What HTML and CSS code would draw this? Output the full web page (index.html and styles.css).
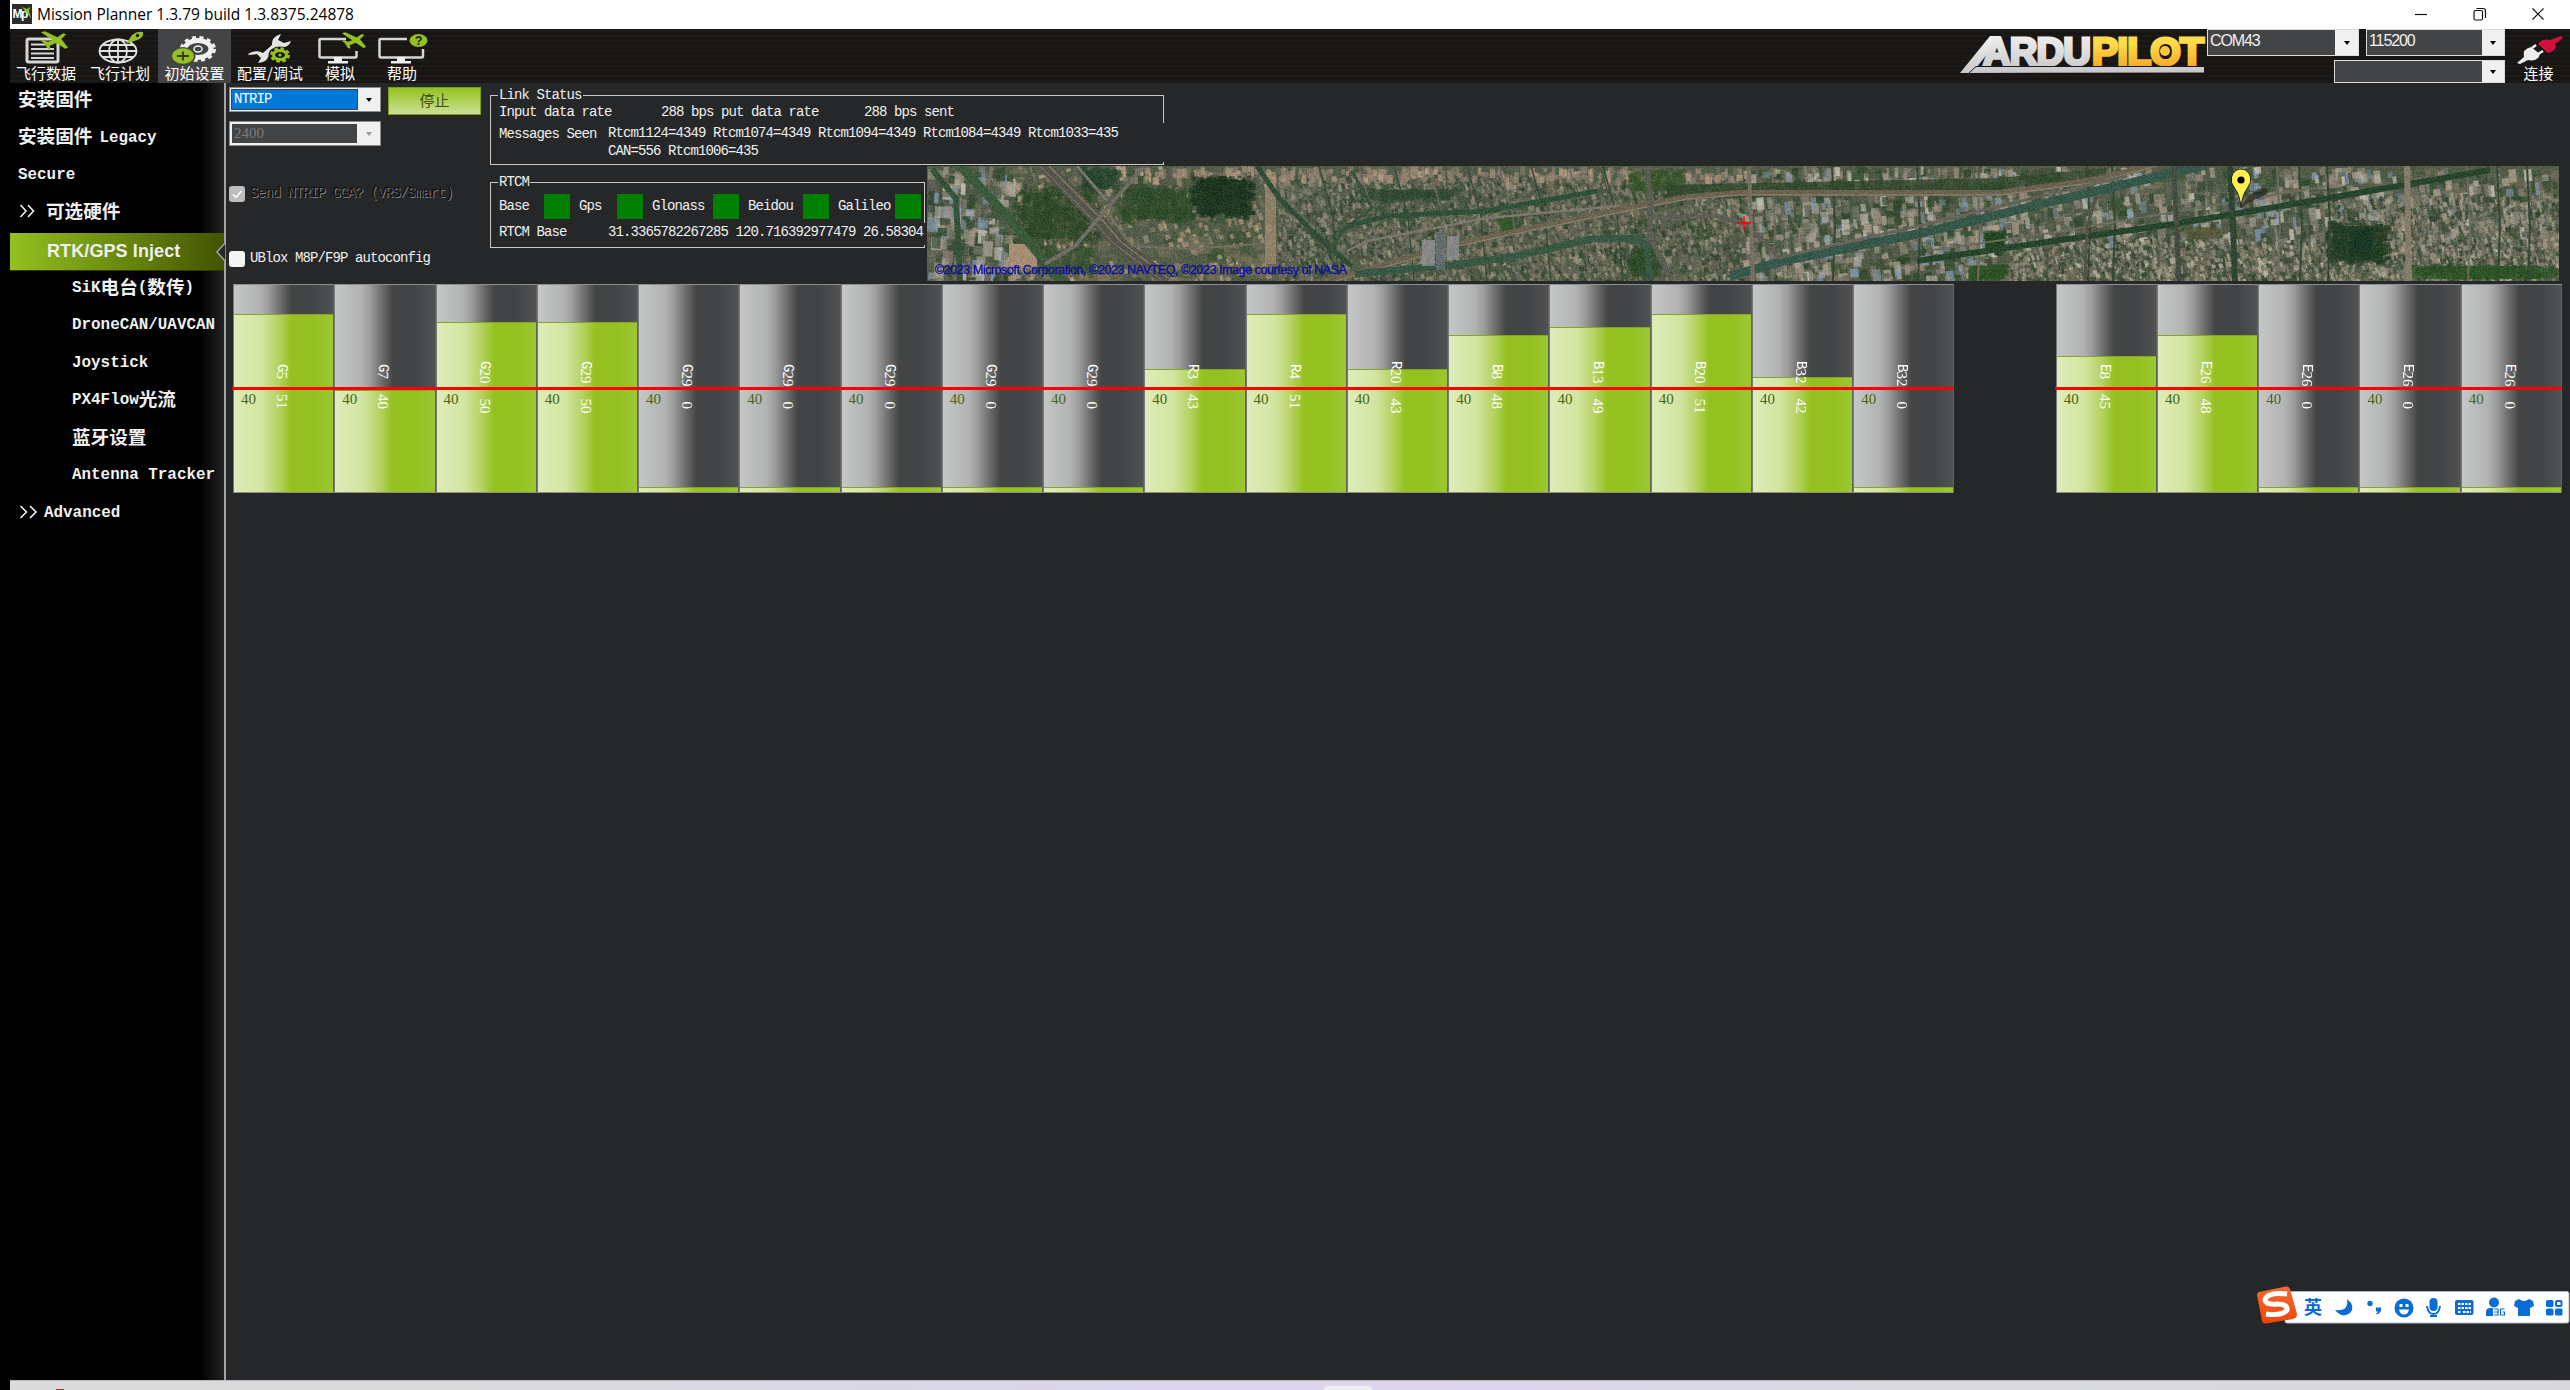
FILE: index.html
```html
<!DOCTYPE html>
<html lang="zh-CN">
<head>
<meta charset="utf-8">
<title>Mission Planner</title>
<link rel="stylesheet" href="styles.css">
</head>
<body>
<svg class="defs" width="0" height="0" aria-hidden="true">
  <defs>
    <linearGradient id="silver" x1="0" y1="0" x2="0" y2="1"><stop offset="0" stop-color="#f4f4f4"/><stop offset="1" stop-color="#c6c6c8"/></linearGradient>
    <linearGradient id="gold" x1="0" y1="0" x2="0" y2="1"><stop offset="0.3" stop-color="#fddb4a"/><stop offset="1" stop-color="#f59a20"/></linearGradient>
    <symbol id="plane" viewBox="0 0 30 20"><path d="M1 1 L5 0 L18 6 L24 2 L27 3 L22 8 L29 17 L26 18 L17 12 L10 15 L11 19 L8 18 L4 12 L1 10 L4 9 L8 11 L13 9 Z" fill="#94c11f"/></symbol>
  </defs>
</svg>
<div class="app">
  <header class="titlebar">
    <svg class="app-icon" viewBox="0 0 20 20"><rect width="20" height="20" fill="#2b2c2e"/><text x="0.5" y="14" textLength="15" class="mp">Mp</text><path d="M10 3l5 2 3-2-1 4 2 7-5-6z" fill="#94c11f"/></svg>
    <span class="title">Mission Planner 1.3.79 build 1.3.8375.24878</span>
    <div class="window-buttons">
      <svg viewBox="0 0 14 14"><path d="M1 7.5h12"/></svg>
      <svg viewBox="0 0 14 14"><rect x="1" y="3.5" width="8.5" height="9.5" rx="1.5"/><path d="M3.5 1.5h6.5q2.5 0 2.5 2.5v7"/></svg>
      <svg viewBox="0 0 14 14"><path d="M1.5 1.5l11 11M12.5 1.5l-11 11"/></svg>
    </div>
  </header>

  <nav class="toolbar">
    <button class="tool t1">
      <svg viewBox="10 29 72 36"><rect x="27" y="39" width="31" height="23" rx="1.5" fill="none" stroke="#d6d6d6" stroke-width="3"/><path d="M31 44.500h14M31 49h23M31 53.500h23M31 58h23" stroke="#d6d6d6" stroke-width="2"/><use href="#plane" x="40" y="31" width="29" height="20"/></svg>
      <span>飞行数据</span>
    </button>
    <button class="tool t2">
      <svg viewBox="82 29 76 36"><g fill="none" stroke="#e0e0e0" stroke-width="1.800"><ellipse cx="118" cy="51" rx="18.500" ry="11.500"/><ellipse cx="118" cy="51" rx="9" ry="11.500"/><path d="M118 39v24M100 51h37M102 45h32M102 57h32"/></g><path d="M126 44 L132 35 Q137 31 143 32 Q144 38 137 40 Z" fill="#94c11f"/><circle cx="137.500" cy="35.500" r="1.700" fill="#1a1816"/></svg>
      <span>飞行计划</span>
    </button>
    <button class="tool t3 active">
      <svg viewBox="158 29 73 36"><ellipse cx="198" cy="49" rx="13" ry="8.500" fill="none" stroke="#f0f0f0" stroke-width="5"/><ellipse cx="198" cy="49" rx="16.500" ry="11.500" fill="none" stroke="#f0f0f0" stroke-width="3" stroke-dasharray="4 3.500"/><ellipse cx="198" cy="49" rx="4" ry="3" fill="none" stroke="#f0f0f0" stroke-width="1.500"/><ellipse cx="183" cy="56" rx="12.500" ry="9" fill="#434445"/><ellipse cx="183" cy="56" rx="11" ry="7.700" fill="#94c11f"/><path d="M177 56h12M183 51.500v9" stroke="#333c10" stroke-width="2"/></svg>
      <span>初始设置</span>
    </button>
    <button class="tool t4">
      <svg viewBox="231 29 78 36"><path d="M248 54 Q257 49 263 53 L272 45 Q271 37 281 34 L278 40 L284 43 L291 41 Q289 48 279 48 L268 57 Q267 62 258 63 L261 58 L257 54 L249 55 Z" fill="#e4e4e4"/><ellipse cx="280" cy="55" rx="11.500" ry="8.500" fill="#1a1816"/><ellipse cx="280" cy="55" rx="6.500" ry="4.500" fill="none" stroke="#94c11f" stroke-width="3"/><ellipse cx="280" cy="55" rx="8.800" ry="6.400" fill="none" stroke="#94c11f" stroke-width="2.500" stroke-dasharray="3.500 2.500"/><circle cx="280" cy="55" r="1.600" fill="#94c11f"/></svg>
      <span>配置/调试</span>
    </button>
    <button class="tool t5">
      <svg viewBox="309 29 62 36"><path d="M346 39H321Q319.500 39 319.500 40V56Q319.500 57.500 321 57.500H355Q356.500 57.500 356.500 56V51" fill="none" stroke="#d6d6d6" stroke-width="2.500"/><path d="M334 57h8v4h6v2.500h-20V61h6z" fill="#eee"/><use href="#plane" x="341" y="31" width="26" height="20"/></svg>
      <span>模拟</span>
    </button>
    <button class="tool t6">
      <svg viewBox="371 29 62 36"><path d="M407 39H381Q379.500 39 379.500 40V56Q379.500 57.500 381 57.500H421Q423 57.500 423 56V49" fill="none" stroke="#d6d6d6" stroke-width="2.500"/><path d="M397 57h8v4h6v2.500h-20V61h6z" fill="#eee"/><ellipse cx="418.500" cy="40.500" rx="9" ry="6.500" fill="#94c11f"/><text x="415" y="45" class="question">?</text></svg>
      <span>帮助</span>
    </button>
    <svg class="logo" viewBox="1959 29 248 54">
      <path d="M1961 73 L1991 36 H2002 L1978 67 H2205 V72.500 Z" fill="url(#silver)"/>
      <text x="1984" y="65" textLength="107" lengthAdjust="spacingAndGlyphs" class="brand" fill="url(#silver)" stroke="url(#silver)">ARDU</text>
      <text x="2093" y="65" textLength="111" lengthAdjust="spacingAndGlyphs" class="brand" fill="url(#gold)" stroke="url(#gold)">PILOT</text>
      <circle cx="2166" cy="51" r="5" fill="#fccb3c"/>
      <path d="M1970 73 L1977 66.500 H2204" stroke="#1a1816" stroke-width="1" fill="none"/>
    </svg>
    <div class="ports">
      <div class="select port"><span class="value">COM43</span><i></i></div>
      <div class="select baud"><span class="value">115200</span><i></i></div>
      <div class="select sysid"><span class="value"></span><i></i></div>
    </div>
    <button class="tool connect">
      <svg viewBox="2507 29 63 36"><path d="M2517 63 L2524 57 Q2522 49 2531 47 L2540 54 Q2538 62 2528 60 L2520 64 Z" fill="#eee"/><path d="M2532 48l4-3M2538 54l5-3" stroke="#eee" stroke-width="2.500"/><path d="M2538 44 Q2542 38 2550 40 L2561 36 L2563 38 L2555 44 Q2558 50 2548 53 Z" fill="#d5103c"/></svg>
      <span>连接</span>
    </button>
  </nav>

  <main class="body">
    <aside class="sidebar">
      <a><b>安装固件</b></a>
      <a><b>安装固件</b><span class="legacy">Legacy</span></a>
      <a><span>Secure</span></a>
      <a><svg class="chev" viewBox="0 0 17 14"><path d="M1.500 1l5.500 6-5.500 6M9 1l5.500 6-5.500 6"/></svg><b class="after">可选硬件</b></a>
      <a class="selected">RTK/GPS Inject<svg viewBox="0 0 10 20"><path d="M10 0L1 10l9 10z"/></svg></a>
      <a class="sub"><span>SiK</span><b>电台</b><span>(</span><b>数传</b><span>)</span></a>
      <a class="sub"><span>DroneCAN/UAVCAN</span></a>
      <a class="sub"><span>Joystick</span></a>
      <a class="sub"><span>PX4Flow</span><b>光流</b></a>
      <a class="sub"><b>蓝牙设置</b></a>
      <a class="sub"><span>Antenna Tracker</span></a>
      <a><svg class="chev wide" viewBox="0 0 19 14"><path d="M1.500 1l6 6-6 6M11 1l6 6-6 6"/></svg><span class="adv">Advanced</span></a>
    </aside>

    <section class="content">
      <div class="top">
        <div class="controls">
          <div class="line">
            <div class="select source"><span class="value">NTRIP</span><i></i></div>
            <button class="stop">停止</button>
          </div>
          <div class="select rate disabled"><span class="value num">2400</span><i></i></div>
          <label class="check disabled"><svg viewBox="0 0 16 16"><path d="M4 8.500l3 3 5.500-6.500"/></svg>Send NTRIP GGA? (VRS/Smart)</label>
          <label class="check ublox"><svg viewBox="0 0 16 16"></svg>UBlox M8P/F9P autoconfig</label>
        </div>
        <div class="status">
          <fieldset class="group link">
            <legend>Link Status</legend>
            <div class="rates"><span class="r1">Input data rate</span><span class="r2">288 bps</span><span class="r3">put data rate</span><span>288 bps sent</span></div>
            <div class="seen"><span class="seen-label">Messages Seen</span><span>Rtcm1124=4349 Rtcm1074=4349 Rtcm1094=4349 Rtcm1084=4349 Rtcm1033=435<br>CAN=556 Rtcm1006=435</span></div>
          </fieldset>
          <div class="lower">
            <fieldset class="group rtcm">
              <legend>RTCM</legend>
              <div class="leds"><span class="l1">Base</span><i></i><span class="l2">Gps</span><i></i><span class="l3">Glonass</span><i></i><span class="l4">Beidou</span><i></i><span class="l5">Galileo</span><i></i></div>
              <div class="base"><span>RTCM Base</span><span>31.3365782267285 120.716392977479 26.58304</span></div>
            </fieldset>
            <div class="map">
              <canvas id="map" width="1632" height="115"></canvas>
              <svg class="pin" viewBox="0 0 44 42"><path d="M11 39 Q22 19 36 20 Q42 24 31 29 Q20 33 12 40z" fill="#1a1a14" opacity="0.550"/><path d="M11 40 Q10 27 4.500 20 Q0 14 1.500 9 Q4 1 11 1 Q18 1 20.500 9 Q22 14 17.500 20 Q12 27 11 40z" fill="#fcf151" stroke="#222" stroke-width="1"/><circle cx="11" cy="12" r="3.600" fill="#000"/></svg>
              <svg class="cross" viewBox="0 0 14 14"><path d="M7 0v14M0 7h14" stroke="#f00" stroke-width="1.300"/></svg>
              <svg class="copyright" viewBox="0 0 414 18"><text x="1" y="13" textLength="412">©2023 Microsoft Corporation, ©2023 NAVTEQ, ©2023 Image courtesy of NASA</text></svg>
            </div>
          </div>
        </div>
      </div>
      <div class="bars" id="bars"></div>
    </section>
  </main>
  <footer class="taskbar"><i class="red"></i><i class="tile"></i></footer>
</div>

<div class="ime">
  <svg viewBox="2256 1284 314 42">
    <defs><linearGradient id="org" x1="0" y1="0" x2="0" y2="1"><stop offset="0" stop-color="#f46a32"/><stop offset="1" stop-color="#f0450c"/></linearGradient></defs>
    <rect x="2285" y="1291.500" width="284" height="31.500" rx="2" fill="#fff" stroke="#a9b8cc"/>
    <path d="M2259 1292 L2286 1286.500 Q2289 1286 2290 1289 L2297 1314 Q2297 1318 2293 1319 L2266 1323.500 Q2263 1324 2262 1321 L2257 1295 Q2257 1292.500 2259 1292z" fill="url(#org)"/>
    <path d="M2287 1294 Q2267 1292 2265 1300 Q2266 1305 2277 1304 Q2288 1304 2287 1310 Q2283 1316 2266 1314" fill="none" stroke="#fff" stroke-width="5"/>
    <text x="2304" y="1314" class="ime-text">英</text>
    <g fill="#0a6cd6">
      <path d="M2347 1299 Q2356 1306 2350 1313 Q2342 1319 2335 1310 Q2349 1312 2347 1299z"/>
      <circle cx="2370" cy="1303.500" r="2.700"/><path d="M2376 1307.500h5q1 5-4 7l-1-1q2-1 2-2h-2z"/>
      <circle cx="2404" cy="1308" r="9.500"/>
      <rect x="2429.500" y="1298" width="8" height="13" rx="4"/><path d="M2427 1306q1 8 6.500 8t6.500-8" fill="none" stroke="#0a6cd6" stroke-width="2"/><path d="M2430 1315h7v2h-7z"/>
      <rect x="2455" y="1300" width="18.500" height="15" rx="2"/>
      <circle cx="2494" cy="1302.500" r="5"/><path d="M2486 1316v-4q0-4 4-4h7v8z"/>
      <path d="M2519 1299l-4 2-1 5 4 2v8h12v-8l4-2-1-5-4-2q-5 4-10 0z"/>
      <rect x="2546" y="1300" width="7.500" height="7" rx="1.500"/><rect x="2546" y="1308.500" width="7.500" height="7" rx="1.500"/><rect x="2555" y="1308.500" width="7.500" height="7" rx="1.500"/>
      <rect x="2556" y="1301" width="5.500" height="5" rx="1" fill="none" stroke="#0a6cd6" stroke-width="2"/>
    </g>
    <g fill="#fff"><rect x="2399.500" y="1304" width="3" height="3"/><rect x="2405.500" y="1304" width="3" height="3"/><path d="M2399 1309.500h10q-1 5-5 5t-5-5z"/><path d="M2493 1308h13v8h-13z"/></g>
    <path d="M2458 1304h13M2458 1308h13M2458 1312h3M2463 1312h8" stroke="#fff" stroke-width="2" stroke-dasharray="2.500 1"/>
    <path d="M2494 1309h4v6h-4M2494 1312h4M2504.500 1309h-4v6h4v-3h-2" fill="none" stroke="#0a6cd6" stroke-width="1.200"/>
  </svg>
</div>
<script src="app.js"></script>
</body>
</html>
```
FILE: styles.css
```css
* { box-sizing: border-box; }
body { margin: 0; background: #000; overflow: hidden; }
.defs { display: block; position: absolute; }
button { border: 0; padding: 0; background: none; font: inherit; color: inherit; }
.app {
  width: 2570px; height: 1390px; padding-left: 10px;
  display: flex; flex-direction: column;
  font: 14px/17.5px "Liberation Mono", "Noto Sans CJK SC", monospace;
  letter-spacing: -0.9px; color: #f0f0f0;
}
.num { font-family: "Liberation Serif", serif; font-size: 15px; letter-spacing: 0; }

/* title bar */
.titlebar { height: 29px; flex: none; background: #fff; display: flex; align-items: center; padding: 0 25px 2px 2px; }
.app-icon { width: 20px; height: 20px; }
.mp { font: bold 12px "Liberation Sans", sans-serif; fill: #fff; }
.title { margin-left: 5px; flex: 1; color: #000; font: 15.5px/26px "Open Sans", "Noto Sans", sans-serif; letter-spacing: 0; }
.window-buttons { display: flex; gap: 44.500px; }
.window-buttons svg { width: 14px; height: 14px; fill: none; stroke: #111; stroke-width: 1.2; }

/* toolbar */
.toolbar {
  height: 54px; flex: none; display: flex;
  background: repeating-linear-gradient(0deg, #1a1816 0 2px, #1e1b18 2px 3px, #171513 3px 5px);
}
.tool { display: flex; flex-direction: column; align-items: center; font: 15px/15px "Noto Sans CJK SC", sans-serif; letter-spacing: 0; color: #fff; }
.tool svg { height: 36px; width: 100%; display: block; }
.t1 { width: 72px; } .t2 { width: 76px; } .t3 { width: 73px; } .t4 { width: 78px; } .t5 { width: 62px; } .t6 { width: 62px; }
.tool.active { background: #434445; }
.connect { width: 63px; margin-left: 2px; }
.question { font: bold 12px "Liberation Sans", sans-serif; fill: #1a1816; }
.logo { width: 248px; height: 54px; margin-left: auto; }
.brand { font: bold 38px "Liberation Sans", sans-serif; stroke-width: 3; }
.ports { width: 298px; margin-left: 1px; display: grid; grid-template-columns: 152px 1fr; column-gap: 7px; row-gap: 4px; grid-template-rows: 27px 23px; }
.ports .select { font: 16px/22px "Liberation Sans", sans-serif; letter-spacing: -1.1px; color: #f0f0f0; }
.port, .baud { height: 27px; }
.sysid { grid-column: 1 / 3; margin-left: 127px; height: 23px; }
.select { display: flex; border: 1.500px solid #dcdcdc; background: #f0f0f0; }
.select .value { flex: 1; background: #434445; padding-left: 2px; white-space: pre; }
.select i { width: 23px; display: flex; align-items: center; justify-content: center; }
.select i::after { content: ""; border: 3.500px solid transparent; border-top: 4px solid #000; border-bottom: 0; }
.ports .baud i, .ports .sysid i { width: 22px; }

/* navigation */
.body { flex: 1; display: flex; min-height: 0; }
.sidebar { width: 216px; flex: none; border-right: 2px solid #a4a4a4; background: linear-gradient(90deg, #000 190px, #222 214px); font-size: 15.900px; font-weight: bold; letter-spacing: 0; }
.sidebar a { height: 37.550px; display: flex; align-items: center; padding-left: 8px; white-space: pre; position: relative; top: -3px; }
.sidebar span { padding-top: 4px; }
.sidebar b { font: bold 18.600px/20px "Noto Sans CJK SC", sans-serif; margin-top: -2px; }
.sidebar .sub { padding-left: 62px; }
.legacy { margin-left: 7px; }
.chev { width: 17px; height: 14px; fill: none; stroke: #f0f0f0; stroke-width: 1.6; margin-left: 1px; }
.chev.wide { width: 19px; }
.after { margin-left: 10px; }
.adv { margin-left: 6px; }
.sidebar .selected { padding-left: 37px; top: 0; background: linear-gradient(90deg, #94c11f, #425400); font: bold 18px "Liberation Sans", sans-serif; letter-spacing: 0.1px; border-bottom: 1px solid #2d3a00; }
.selected svg { position: absolute; right: -2px; top: 9px; width: 10px; height: 20px; fill: #262729; stroke: #a4a4a4; stroke-width: 1.5; }

/* content */
.content { flex: 1; background: #262729; padding: 4px 0 0 3px; min-width: 0; }
.top { display: flex; height: 197px; }
.controls { width: 252px; flex: none; display: flex; flex-direction: column; }
.line { display: flex; justify-content: space-between; height: 28px; align-items: flex-start; }
.controls .select { width: 152px; height: 25px; border: 1px solid #8b8b8b; padding: 2px 0 2px 2px; line-height: 19px; }
.controls .select i { margin: -2px 0; }
.source .value { background: #0078d7; outline: 1px solid #434445; color: #fff; }
.controls .rate { margin-top: 6px; }
.rate .value { color: #7b7c7d; }
.rate i::after { border-top-color: #9a9a9a; }
.stop { width: 93px; height: 28px; background: linear-gradient(#94c11f, #cde296); border: 1px solid #799e1a; color: #404f0a; font: 15px/21px "Noto Sans CJK SC", sans-serif; letter-spacing: 0; padding-bottom: 4px; }
.check { display: flex; align-items: center; gap: 5px; height: 18px; margin-top: 39px; }
.check svg { width: 16px; height: 16px; border-radius: 3px; background: #f4f4f4; fill: none; stroke: #fff; stroke-width: 1.5; }
.check.disabled { color: #0c0d0e; text-shadow: 1px 1px 0 #808182; }
.check.disabled svg { background: #bdbdbd; }
.check.ublox { margin-top: 47px; }
.status { margin-left: 9px; flex: 1; }
.group { margin: 0; padding: 0; border: 1px solid #c8c8c8; min-width: 0; position: relative; }
.group legend { margin-left: 7px; padding: 0 1px; line-height: 16px; height: 16px; }
.link { width: 674px; height: 78px; }
.link::after { content: ""; position: absolute; right: -1px; top: 20px; width: 1px; height: 39px; background: #262729; }
.rates { display: flex; padding-left: 8px; line-height: 18px; }
.r1 { width: 162px; } .r2 { width: 60px; } .r3 { width: 143px; }
.seen { display: flex; padding: 4px 0 0 8px; white-space: pre; }
.seen-label { width: 109px; padding-top: 1px; }
.lower { display: flex; height: 117px; padding-top: 1px; }
.rtcm { width: 435px; height: 74px; margin-top: 8px; }
.rtcm::after { content: ""; position: absolute; right: -1px; top: 33px; width: 1px; height: 22px; background: #262729; }
.leds { display: flex; align-items: center; padding-left: 8px; height: 27px; margin-top: 3px; }
.leds i { width: 25.500px; height: 25px; background: #008000; }
.leds i + span { margin-left: 9.500px; }
.l1 { width: 45px; } .l2 { width: 38px; } .l3 { width: 61px; } .l4 { width: 55px; } .l5 { width: 57px; }
.leds span { padding-top: 1px; }
.base { display: flex; padding-left: 8px; white-space: pre; line-height: 25px; }
.base span:first-child { width: 109px; flex: none; }
.map { width: 1632px; height: 115px; margin-left: 2px; position: relative; overflow: hidden; flex: none; }
.map canvas { display: block; }
.pin { position: absolute; left: 1303px; top: 2px; width: 44px; height: 42px; }
.cross { position: absolute; left: 810px; top: 50px; width: 14px; height: 14px; }
.copyright { position: absolute; left: 7px; top: 95px; width: 414px; height: 18px; }
.copyright text { font: 12.500px "Liberation Sans", sans-serif; letter-spacing: 0; fill: #10109c; stroke: #10109c; stroke-width: 0.4; }

/* signal bars */
.bars { width: 2329px; height: 209px; margin-left: 4px; display: grid; grid-template-columns: repeat(23, 1fr); }
.bar {
  position: relative; display: flex; flex-direction: column; justify-content: flex-end;
  border: 1px solid #8e8f8f; border-left-color: #77787a; border-right: 1px solid #626361;
  background: linear-gradient(90deg, #c5c6c6, #b2b3b3 26%, #9b9c9b 35%, #606160 50%, #434445 58%, #434445 80%, #515253);
}
.fill { background: linear-gradient(90deg, #dfecb9, #d2e5a0 28%, #b7d365 44%, #94c11f 58%, #94c11f 80%, #9cc732); border-top: 1px solid #85a528; }
.bar::after { content: ""; position: absolute; left: -2px; right: -1px; top: 102px; height: 2.500px; background: #f00; }
.bar .name { position: absolute; left: 40px; top: 0; height: 204px; line-height: 16px; text-align: center; writing-mode: vertical-rl; white-space: pre; color: #fff; }
.bar .limit { position: absolute; left: 7px; top: 105px; line-height: 18px; color: #4a6410; }

/* desktop edge */
.taskbar { height: 10px; flex: none; position: relative; border-top: 1px solid #bab5c0; background: linear-gradient(90deg, #d9dad9 15%, #dad6e8 40%, #dcd5ed 55%, #d9dade 75%, #d8d8da); }
.taskbar i { position: absolute; bottom: 0; }
.tile { left: 1314px; width: 48px; height: 4px; background: #f0eff4; border-radius: 3px 3px 0 0; }
.red { left: 46px; width: 8px; height: 1px; background: #a33; }
.ime { position: absolute; left: 2256px; top: 1284px; width: 314px; height: 42px; }
.ime svg { display: block; width: 314px; height: 42px; }
.ime-text { font: bold 18px "Noto Sans CJK SC", sans-serif; fill: #0a6cd6; }
```
FILE: app.js
```js
// Satellites: name, signal level, fill height in px; null leaves a gap.
const sats = [
  ['G5', 51, 178], ['G7', 40, 102], ['G20', 50, 170], ['G29', 50, 170],
  ['G29', 0, 5], ['G29', 0, 5], ['G29', 0, 5], ['G29', 0, 5], ['G29', 0, 5],
  ['R3', 43, 123], ['R4', 51, 178], ['R20', 43, 123], ['B8', 48, 157],
  ['B13', 49, 165], ['B20', 51, 178], ['B32', 42, 115], ['B32', 0, 5],
  null,
  ['E8', 45, 136], ['E26', 48, 157], ['E26', 0, 5], ['E26', 0, 5], ['E26', 0, 5]
];
document.getElementById('bars').innerHTML = sats.map(s => s
  ? `<div class="bar"><div class="fill" style="height:${s[2]}px"></div><span class="name">${s[0][0]}<span class="num">${s[0].slice(1)}</span>  <span class="num">${s[1]}</span></span><span class="limit num">40</span></div>`
  : '<div></div>').join('');

// Aerial imagery: ground, parcels, building roofs, then roads and canals.
const c = document.getElementById('map').getContext('2d');
let seed = 7;
const rnd = () => (seed = (seed * 16807) % 2147483647) / 2147483647;
const pick = a => a[Math.floor(rnd() * a.length)];
const W = 1632, H = 115;
c.fillStyle = '#525c48';
c.fillRect(0, 0, W, H);
for (let i = 0; i < 900; i++) {
  c.fillStyle = pick(['#2f4a2b', '#3a5533', '#77705c', '#6b6c5e', '#4c5c42', '#7d735c', '#5f6656']);
  c.globalAlpha = 0.5;
  c.fillRect(rnd() * W, rnd() * H, 6 + rnd() * 24, 4 + rnd() * 14);
}
c.globalAlpha = 1;
// Woodland: a cluster of small overlapping dark strokes inside the box.
function patch(x, y, w, h, col, a = 0.6) {
  c.fillStyle = col; c.globalAlpha = a;
  c.fillRect(x + w * 0.12, y + h * 0.12, w * 0.76, h * 0.76);
  for (let i = 0; i < w * h / 18; i++) {
    c.globalAlpha = a * (0.4 + rnd() * 0.6);
    c.fillRect(x + rnd() * (w - 6), y + rnd() * (h - 5), 3 + rnd() * 6, 2 + rnd() * 6);
  }
  c.globalAlpha = 1;
}
function roofs(n, x0, y0, w, h, cols, s, ang) {
  for (let i = 0; i < n; i++) {
    const x = x0 + rnd() * w, y = y0 + rnd() * h;
    c.save(); c.translate(x, y); c.rotate(ang);
    c.fillStyle = pick(cols); c.globalAlpha = 0.4 + rnd() * 0.45;
    c.fillRect(0, 0, s * (0.4 + rnd() * 0.7), s * (0.6 + rnd() * 1.1));
    c.restore();
  }
}
const fac = ['#a39c8e', '#c6c1b8', '#7f7b70', '#7f96ab', '#95887a', '#5f6058', '#ac9f8d', '#344a30', '#2f472c', '#46583f'];
const res = ['#8c8573', '#736f60', '#2f4330', '#9c9582', '#5c5e52', '#3d5039'];
roofs(260, 0, 0, 95, 115, fac, 10, 0.05);
roofs(450, 80, 0, 260, 115, ['#b59c80', '#a08a70', '#84785f', '#3d5533', '#4d6040', '#bfa98d'], 5, -0.3);
roofs(4200, 350, 10, 470, 105, res, 4, -0.25);
roofs(300, 200, 0, 620, 12, ['#b59c80', '#9c8475', '#857c70'], 6, 0);
patch(85, 20, 90, 60, '#2c4826'); patch(185, 18, 85, 40, '#2c4a28');
patch(150, 0, 45, 26, '#264530'); patch(110, 78, 60, 32, '#34502e', 0.4);
patch(262, 9, 66, 44, '#1d3620', 0.9);
patch(570, 45, 22, 26, '#35562a'); patch(430, 22, 110, 14, '#2f4a30');
patch(700, 80, 36, 34, '#2c4a27'); patch(700, 2, 60, 26, '#35532a');
c.fillStyle = '#a48d73'; c.fillRect(82, 78, 28, 24);
c.globalAlpha = 0.7; c.fillRect(338, 6, 11, 92); c.globalAlpha = 1;
roofs(260, 820, 0, 400, 18, fac, 7, 0);
roofs(600, 815, 30, 250, 80, fac, 8, -0.1);
roofs(650, 1050, 25, 580, 50, fac, 8, -0.12);
roofs(220, 1250, 0, 380, 35, fac, 8, -0.12);
roofs(3200, 1080, 72, 552, 43, res.concat('#bdb6a0'), 4, -0.3);
roofs(1100, 1400, 30, 232, 60, res.concat('#a9a08a'), 4, -0.2);
patch(1398, 54, 66, 46, '#233d23', 0.85); patch(1420, 60, 28, 30, '#1b3827', 0.8);
patch(1255, 60, 42, 14, '#585838'); patch(1055, 64, 26, 24, '#25451f', 0.8);
patch(1476, 98, 156, 17, '#2d5226', 0.8); patch(1036, 98, 48, 17, '#2d5226', 0.8);

function line(col, w, ...p) {
  c.strokeStyle = col; c.lineWidth = w; c.lineJoin = 'round';
  c.beginPath(); c.moveTo(p[0], p[1]);
  for (let i = 2; i < p.length; i += 2) c.lineTo(p[i], p[i + 1]);
  c.stroke();
}
[400, 440, 475, 510, 548, 580, 612, 650, 684].forEach((x, i) => line(i % 2 ? '#6c6a62' : '#34493a', 1.5, x - 8, 0, x + 6, 50, x + 12, 115));
[845, 905, 990, 1050, 1160, 1185, 1350, 1372, 1400, 1540, 1570, 1600].forEach((x, i) => line(i % 3 ? '#344834' : '#6d6b60', 2, x, 0, x + 3, 60, x + 1, 115));
line('#35533a', 6, 5, 3, 29, 33, 33, 115);
line('#3b5a3b', 9, 33, 0, 80, 50, 134, 115);
line('#55554b', 13, 118, 0, 172, 55, 190, 76, 241, 115);
line('#7f7966', 1.5, 122, 0, 176, 55, 194, 76, 245, 115);
line('#7d7a70', 1, 113, 0, 167, 55, 185, 76, 236, 115);
line('#706d65', 4, 217, 0, 177, 46, 148, 80, 118, 98);
line('#746f64', 2, 180, 46, 205, 80, 260, 83, 330, 78);
line('#777469', 3, 150, 0, 180, 35);
line('#314d37', 5, 330, 0, 352, 32, 400, 80, 425, 100);
line('#31503a', 5, 420, 60, 460, 50, 560, 45, 670, 25);
line('#35523e', 3, 402, 90, 415, 65, 445, 42, 425, 5);
line('#7c776c', 2.5, 420, 85, 440, 75, 560, 52, 690, 40);
c.globalAlpha = 0.8;
line('#2f472a', 14, 740, 26, 1071, 19, 1180, 9);
c.globalAlpha = 1;
line('#6b6250', 6, 402, 115, 530, 78, 640, 55, 760, 31, 813, 27, 1071, 27, 1160, 15, 1225, 0);
line('#8f866e', 1, 402, 117, 530, 80, 640, 57, 760, 33, 813, 29, 1071, 29, 1165, 17, 1230, 0);
line('#395844', 7, 428, 108, 535, 98, 590, 90, 664, 73, 710, 72, 720, 80, 723, 115);
line('#5c5d55', 5, 720, 0, 724, 40, 722, 70, 745, 115);
line('#5f5d54', 4, 725, 52, 790, 50, 820, 58, 850, 90);
line('#36584a', 9, 803, 110, 860, 94, 1000, 66, 1140, 32, 1279, -1);
line('#65645a', 3, 850, 92, 1000, 58, 1140, 24, 1200, 10);
line('#27442d', 6, 990, 95, 1120, 76, 1247, 58, 1397, 33, 1563, 4);
line('#6d6b60', 2, 1000, 85, 1130, 66, 1400, 20);
line('#786f62', 4, 822, 0, 826, 115);
line('#454c42', 5, 1247, 0, 1252, 115);
line('#2f4635', 6, 1303, 0, 1306, 60, 1308, 115);
line('#857c6c', 6, 1480, 0, 1482, 115);
line('#565349', 3, 1158, 115, 1160, 60, 1170, 30);
c.globalAlpha = 0.8;
c.fillStyle = '#8d9194'; c.fillRect(495, 74, 13, 26); c.fillRect(520, 70, 12, 24);
c.fillStyle = '#667078'; c.fillRect(509, 66, 9, 38);
c.globalAlpha = 1;

// Fine grain over the whole picture.
const img = c.getImageData(0, 0, W, H);
for (let i = 0; i < img.data.length; i += 4) {
  const n = (rnd() - 0.5) * 26;
  for (let k = 0; k < 3; k++) img.data[i + k] += n;
}
c.putImageData(img, 0, 0);
```
